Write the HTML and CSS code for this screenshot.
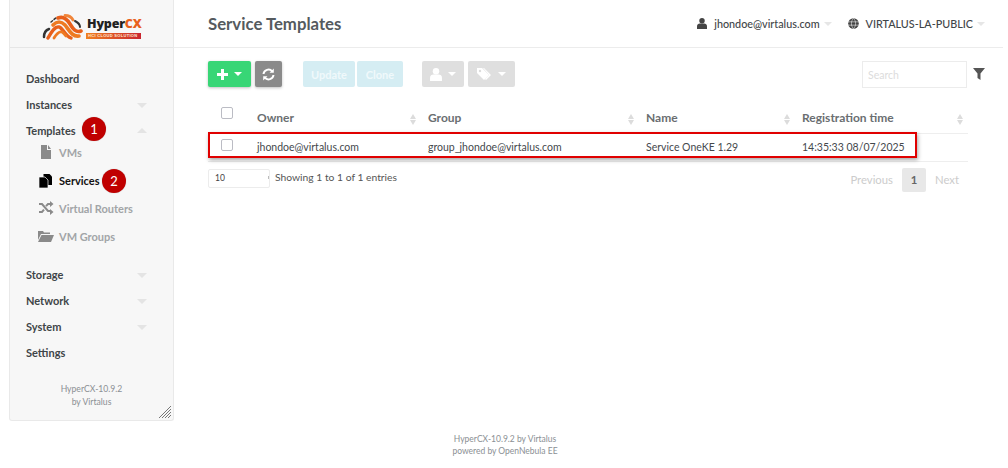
FILE: index.html
```html
<!DOCTYPE html>
<html>
<head>
<meta charset="utf-8">
<title>Service Templates</title>
<link rel="stylesheet" href="styles.css">
</head>
<body>
<div class="app">
  <aside class="sidebar">
    <div class="logo">
      <svg class="logo-mark" width="42" height="26" viewBox="0 0 42 26">
        <g fill="none" stroke-linecap="round">
          <path d="M2 23 C2 19 4 16 7 15" stroke="#333" stroke-width="2.500"/>
          <path d="M6 24 C10 17 13 12 17 13 C21 14 23 22 29 24" stroke="#e8601c" stroke-width="3.400"/>
          <path d="M12 24 C15 19 17 17 20 18 C22 19 23 21 24 22" stroke="#ee7a22" stroke-width="2.800"/>
          <path d="M11 11 C15 7 19 7 23 11 C27 16 30 23 37 22" stroke="#ee7a22" stroke-width="3.600"/>
          <path d="M16 4 C21 2 25 5 28 10 C31 15 34 19 39 17" stroke="#e8601c" stroke-width="3.600"/>
          <path d="M23 1.500 C27 1.500 30 4 31 6" stroke="#f0853a" stroke-width="2.800"/>
          <path d="M9 8 L15 3" stroke="#333" stroke-width="1.500" stroke-dasharray="2 2"/>
          <path d="M33 7 C37 9 38 11 38 13" stroke="#333" stroke-width="2"/>
        </g>
      </svg>
      <div class="logo-text">
        <div class="logo-name">Hyper<span class="logo-cx">CX</span></div>
        <div class="logo-tag">HCI CLOUD SOLUTION</div>
      </div>
    </div>
    <nav class="menu">
      <div class="item">Dashboard</div>
      <div class="item">Instances<span class="caret-down"></span></div>
      <div class="item">Templates<span class="caret-up"></span><span class="badge badge-one">1</span></div>
      <div class="sub">
        <div class="sub-item">
          <svg class="sub-icon" width="16" height="16" viewBox="0 0 16 16"><path d="M3 1h6v5h4v9H3z M10 1l3 4h-3z" fill="#8a8a8a"/></svg>VMs
        </div>
        <div class="sub-item active">
          <svg class="sub-icon" width="16" height="16" viewBox="0 0 16 16"><path d="M5.500 2h6l2.500 2.500V13H5.500z" fill="#000"/><path d="M1 5h6l3 3v8H1z" fill="#000" stroke="#f7f7f7" stroke-width=".7"/></svg>Services<span class="badge badge-two">2</span>
        </div>
        <div class="sub-item">
          <svg class="sub-icon" width="16" height="16" viewBox="0 0 16 16"><path d="M1 4h3l6 7h2M1 12h3l2-2.400M8 6.200L10 4h2" fill="none" stroke="#8a8a8a" stroke-width="2"/><path d="M12 1l3.500 3L12 7zM12 9l3.500 3-3.500 3z" fill="#8a8a8a"/></svg>Virtual Routers
        </div>
        <div class="sub-item">
          <svg class="sub-icon" width="16" height="16" viewBox="0 0 16 16"><path d="M0 3h5l1 1.500h6V6H3L0 12z" fill="#8a8a8a"/><path d="M3.500 7H16l-3 7H0z" fill="#8a8a8a"/></svg>VM Groups
        </div>
      </div>
      <div class="item">Storage<span class="caret-down"></span></div>
      <div class="item">Network<span class="caret-down"></span></div>
      <div class="item">System<span class="caret-down"></span></div>
      <div class="item">Settings</div>
    </nav>
    <div class="side-foot">HyperCX-10.9.2<br>by Virtalus</div>
    <svg class="grip" width="14" height="14" viewBox="0 0 14 14"><path d="M13 1L1 13M13 4L4 13M13 7L7 13M13 10L10 13" stroke="#777" stroke-width="1"/></svg>
  </aside>
  <main class="main">
    <header class="topbar">
      <h1 class="title">Service Templates</h1>
      <div class="top-right">
        <span class="top-link">
          <svg width="10" height="11" viewBox="0 0 11 12"><circle cx="5.500" cy="3" r="3" fill="#444"/><path d="M0 12V9c0-2 1.500-3 3-3h5c1.500 0 3 1 3 3v3z" fill="#444"/></svg>
          jhondoe@virtalus.com<span class="caret-small"></span>
        </span>
        <span class="top-link top-cloud">
          <svg width="11" height="11" viewBox="0 0 12 12"><circle cx="6" cy="6" r="5.800" fill="#444"/><path d="M0 4.200h12M0 7.800h12M6 .5C3 3 3 9 6 11.500M6 .5C9 3 9 9 6 11.500" stroke="#fff" stroke-width=".6" fill="none"/></svg>
          VIRTALUS-LA-PUBLIC<span class="caret-small"></span>
        </span>
      </div>
    </header>
    <div class="content">
      <div class="toolbar">
        <button class="btn btn-green">
          <svg width="11" height="11" viewBox="0 0 11 11"><path d="M4 0h3v4h4v3H7v4H4V7H0V4h4z" fill="#fff"/></svg><span class="caret-white"></span>
        </button>
        <button class="btn btn-gray">
          <svg width="13" height="13" viewBox="0 0 13 13"><path d="M1.500 6a5 5 0 0 1 8.700-2.700M11.500 7a5 5 0 0 1-8.700 2.700" fill="none" stroke="#fff" stroke-width="2"/><path d="M11.800 .5v4.300H7.500zM1.200 12.500V8.200h4.300z" fill="#fff"/></svg>
        </button>
        <button class="btn btn-blue btn-update">Update</button>
        <button class="btn btn-blue btn-clone">Clone</button>
        <button class="btn btn-light btn-user">
          <svg width="12" height="13" viewBox="0 0 11 12"><circle cx="5.500" cy="3" r="3" fill="#fff"/><path d="M0 12V9c0-2 1.500-3 3-3h5c1.500 0 3 1 3 3v3z" fill="#fff"/></svg><span class="caret-white"></span>
        </button>
        <button class="btn btn-light btn-tag">
          <svg width="15" height="13" viewBox="0 0 15 13"><path d="M0 0h5l7 7-5 5-7-7z" fill="#fff"/><path d="M7 0l7 7-5 5-1-1 4-4-6-7z" fill="#fff"/><circle cx="3" cy="3" r="1.200" fill="#ddd"/></svg><span class="caret-white"></span>
        </button>
        <div class="search-wrap">
          <input class="search" placeholder="Search">
          <svg class="filter" width="12" height="12" viewBox="0 0 12 12"><path d="M0 0h12L7.500 5.500V12l-3-2V5.500z" fill="#555"/></svg>
        </div>
      </div>
      <table class="grid">
        <colgroup>
          <col class="c0"><col class="c1"><col class="c2"><col class="c3"><col class="c4">
        </colgroup>
        <thead>
          <tr>
            <th class="check-cell"><span class="box box-head"></span></th>
            <th>Owner<span class="sort"></span></th>
            <th>Group<span class="sort"></span></th>
            <th>Name<span class="sort"></span></th>
            <th>Registration time<span class="sort sort-last"></span></th>
          </tr>
        </thead>
        <tbody>
          <tr>
            <td class="check-cell"><span class="box"></span></td>
            <td>jhondoe@virtalus.com</td>
            <td>group_jhondoe@virtalus.com</td>
            <td>Service OneKE 1.29</td>
            <td>14:35:33 08/07/2025</td>
          </tr>
        </tbody>
      </table>
      <div class="highlight"></div>
      <div class="table-foot">
        <div class="entries">
          <div class="select">10<span class="select-tick"></span></div>
          <span>Showing 1 to 1 of 1 entries</span>
        </div>
        <div class="pager">
          <span>Previous</span>
          <span class="page">1</span>
          <span>Next</span>
        </div>
      </div>
    </div>
  </main>
</div>
<footer class="foot">HyperCX-10.9.2 by Virtalus<br>powered by OpenNebula EE</footer>
</body>
</html>
```
FILE: styles.css
```css
* { box-sizing: border-box; }
html, body { margin: 0; padding: 0; }
body { font-family: Lato, "Open Sans", sans-serif; color: #555; background: #fff; height: 468px; overflow: hidden; }
.app { display: flex; height: 421px; padding-left: 9px; }

.sidebar { position: relative; width: 165px; height: 421px; background: #f7f7f7; border: 1px solid #e9e9e9; border-top: 0; border-radius: 0 0 3px 3px; display: flex; flex-direction: column; flex: none; }
.logo { height: 48px; border-bottom: 1px solid #e6e6e6; display: flex; align-items: flex-start; padding: 14px 0 0 32px; }
.logo-mark { flex: none; margin-right: 2px; }
.logo-text { display: flex; flex-direction: column; margin-top: 2px; }
.logo-name { font: 800 12.500px/16px "Open Sans", sans-serif; color: #222; padding-left: 1px; letter-spacing: -.2px; }
.logo-cx { color: #e8601c; }
.logo-tag { width: 55px; height: 6px; margin-top: 1px; font: 700 4px/6px "Liberation Sans", sans-serif; letter-spacing: .3px; color: #ffe9d6; white-space: nowrap; padding-left: 2px; background: linear-gradient(90deg, #f08020, #c9252f); }

.menu { padding-top: 18px; display: flex; flex-direction: column; }
.item { position: relative; height: 26px; line-height: 26px; padding-left: 16px; font-size: 11px; font-weight: 700; color: #3f4548; }
.caret-down, .caret-up { position: absolute; left: 127px; width: 0; height: 0; border-left: 5px solid transparent; border-right: 5px solid transparent; }
.caret-down { top: 11px; border-top: 5px solid #e4e4e4; }
.caret-up { top: 10px; border-bottom: 5px solid #e4e4e4; }
.sub { display: flex; flex-direction: column; padding-bottom: 12px; margin-top: -6px; }
.sub-item { position: relative; height: 28px; display: flex; align-items: center; padding-left: 28px; font-size: 11px; font-weight: 700; color: #a2a5a7; }
.sub-item.active { color: #111; }
.sub-icon { width: 16px; margin-right: 5px; flex: none; }

.badge { position: absolute; width: 24px; height: 24px; border-radius: 50%; background: #c00000; color: #fff; font-size: 13px; font-weight: 400; line-height: 24px; text-align: center; box-shadow: 0 0 1px rgba(0,0,0,.3); }
.badge-one { left: 72px; top: -1px; }
.badge-two { left: 92px; top: 3px; }

.side-foot { position: absolute; left: 0; right: 0; top: 383px; text-align: center; font-size: 8.600px; line-height: 13px; color: #8b8f94; }
.grip { position: absolute; right: 1px; bottom: 1px; }

.main { flex: 1; min-width: 0; padding-right: 5px; }
.topbar { height: 48px; border-bottom: 1px solid #ececec; display: flex; align-items: center; justify-content: space-between; padding-left: 34px; }
.title { margin: 0; font-size: 16.750px; font-weight: 700; color: #555a5e; }
.top-right { display: flex; align-items: center; font-size: 10.800px; font-weight: 500; color: #3f4548; padding-right: 18px; }
.top-link { display: flex; align-items: center; }
.top-link svg { margin-right: 7px; }
.top-cloud { margin-left: 16px; }
.caret-small { display: inline-block; width: 0; height: 0; margin-left: 4px; border-left: 4px solid transparent; border-right: 4px solid transparent; border-top: 4px solid #e6e6e6; }

.content { position: relative; padding: 13px 36px 0 34px; }
.toolbar { display: flex; align-items: flex-start; height: 27px; }
.btn { height: 26px; border: 0; border-radius: 2px; display: flex; align-items: center; justify-content: center; padding: 0; font: 700 11px Lato, sans-serif; }
.btn-green { width: 43px; background: #38d676; box-shadow: 0 1px 3px rgba(0,0,0,.25); }
.btn-gray { width: 27px; margin-left: 4px; background: #8a8a8a; box-shadow: 0 1px 3px rgba(0,0,0,.25); }
.btn-blue { background: #d5edf3; color: #f0f9fb; }
.btn-update { width: 52px; margin-left: 21px; }
.btn-clone { width: 46px; margin-left: 2px; }
.btn-light { background: #dfdfdf; }
.btn-user { width: 42px; margin-left: 19px; }
.btn-tag { width: 47px; margin-left: 4px; }
.caret-white { display: inline-block; margin-left: 6px; width: 0; height: 0; border-left: 4px solid transparent; border-right: 4px solid transparent; border-top: 4px solid #fff; }
.search-wrap { position: relative; margin-left: auto; width: 105px; }
.search { display: block; width: 105px; height: 27px; border: 1px solid #ececec; background: #fff; padding: 0 5px; font: 10.500px Lato, sans-serif; outline: 0; }
.search::placeholder { color: #dcdcdc; }
.filter { position: absolute; left: 111px; top: 7px; }

.grid { border-collapse: collapse; table-layout: fixed; width: 760px; margin-top: 13px; font-size: 10.500px; color: #44484c; }
.c0 { width: 37px; } .c1 { width: 171px; } .c2 { width: 218px; } .c3 { width: 156px; } .c4 { width: 178px; }
.grid th { position: relative; height: 32px; padding: 2px 12px 0; text-align: left; font-size: 12px; font-weight: 700; color: #6a6e71; border-bottom: 1px solid #eee; }
.grid td { height: 28px; padding: 0 12px; border-bottom: 1px solid #eee; white-space: nowrap; }
.check-cell { padding-left: 13px !important; padding-right: 0 !important; }
.box { display: block; width: 12px; height: 12px; border: 1px solid #bbbcc4; border-radius: 2px; background: #fff; margin-top: -5px; }
.box-head { margin-top: -9px; }
.sort { position: absolute; right: 0; top: 13px; width: 0; height: 0; border-left: 3.500px solid transparent; border-right: 3.500px solid transparent; border-bottom: 5px solid #dcdcdc; }
.sort::after { content: ""; position: absolute; left: -3.500px; top: 6px; border-left: 3.500px solid transparent; border-right: 3.500px solid transparent; border-top: 5px solid #dcdcdc; }
.sort-last { right: 5px; }

.highlight { position: absolute; left: 34px; top: 84px; width: 709px; height: 26px; border: 2px solid #e00000; box-shadow: 1px 2px 4px rgba(0,0,0,.35); pointer-events: none; }

.table-foot { display: flex; justify-content: space-between; margin-top: 6px; width: 760px; }
.entries { display: flex; align-items: flex-start; font-size: 10.300px; color: #555; line-height: 17px; margin-top: 1px; }
.select { position: relative; width: 62px; height: 19px; border: 1px solid #ececec; border-radius: 2px; padding-left: 6px; font-size: 8.500px; margin-right: 5px; color: #444; }
.select-tick { position: absolute; right: 0; top: 6px; width: 1px; height: 3px; background: #bbb; }
.pager { display: flex; align-items: center; font-size: 11.300px; color: #ccc; height: 24px; padding-right: 9px; }
.page { width: 24px; height: 24px; margin: 0 9px; background: #e8e8e8; border-radius: 2px; color: #666; font-weight: 700; line-height: 24px; text-align: center; }

.foot { text-align: center; font-size: 8.500px; line-height: 12px; color: #8b8f94; padding: 12px 0 0 2px; }
```
